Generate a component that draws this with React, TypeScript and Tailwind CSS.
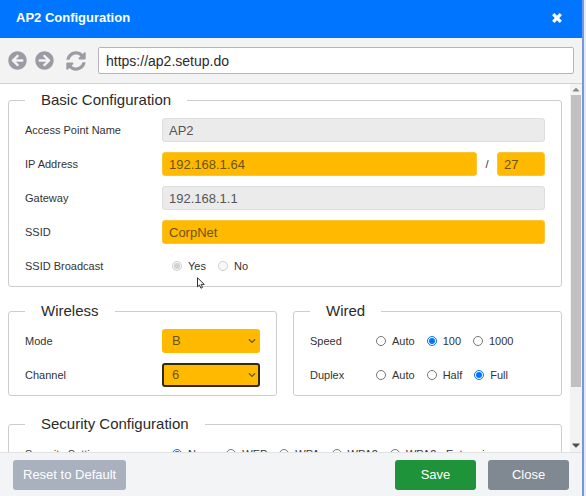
import { useState } from 'react';
import { FaArrowCircleLeft, FaArrowCircleRight, FaCaretDown, FaCaretUp, FaChevronDown, FaSyncAlt } from 'react-icons/fa';

const inputBase = 'h-6 min-w-0 rounded-[3px] px-[6px] text-[13px] leading-[18px] outline-none';
const lockedInput = `${inputBase} w-full border border-[#dedede] bg-[#ebebeb] text-[#555]`;
const editInput = `${inputBase} border border-[#fbc53a] bg-[#ffba00] text-[#6b5418]`;

type Option = { value: string };

const SECURITY: Option[] = [
  { value: 'None' },
  { value: 'WEP' },
  { value: 'WPA' },
  { value: 'WPA2' },
  { value: 'WPA2 - Enterprise' },
];

function Section({ title, children }: { title: string; children: React.ReactNode }) {
  return (
    <fieldset className="min-w-0 rounded-[3px] border border-[#cdcdcd] px-4 pb-[3px]">
      <legend className="mb-[3px] px-4 text-[15px] leading-5 text-[#2b2b2b]">{title}</legend>
      {children}
    </fieldset>
  );
}

function Field({ label, htmlFor, children }: { label: string; htmlFor: string; children: React.ReactNode }) {
  return (
    <div className="flex h-[34px] items-center">
      <label htmlFor={htmlFor} className="w-[137px] shrink-0">{label}</label>
      {children}
    </div>
  );
}

function RadioField({
  label,
  name,
  options,
  initial,
  disabled = false,
  labelClass = 'w-[147px]',
}: {
  label: string;
  name: string;
  options: Option[];
  initial: string;
  disabled?: boolean;
  labelClass?: string;
}) {
  const [value, setValue] = useState(initial);

  return (
    <div role="radiogroup" aria-labelledby={`${name}-label`} className="flex h-[34px] items-center">
      <span id={`${name}-label`} className={`${labelClass} shrink-0`}>{label}</span>
      <div className="flex gap-3 whitespace-nowrap">
        {options.map((o) => (
          <label key={o.value} className="flex items-center gap-[6px]">
            <input
              type="radio"
              name={name}
              value={o.value}
              checked={value === o.value}
              disabled={disabled}
              onChange={() => setValue(o.value)}
              className="size-[10px]"
            />
            {o.value}
          </label>
        ))}
      </div>
    </div>
  );
}

function SelectField({ label, id, options, initial, active = false }: { label: string; id: string; options: string[]; initial: string; active?: boolean }) {
  return (
    <Field label={label} htmlFor={id}>
      <div className="relative min-w-0 flex-1">
        <select
          id={id}
          defaultValue={initial}
          className={`h-6 w-full appearance-none rounded-[3px] bg-[#ffba00] px-2 text-[13px] leading-[18px] text-[#6b5418] outline-none ${
            active ? 'border-2 border-[#33290c]' : 'border-2 border-[#ffba00]'
          }`}
        >
          {options.map((o) => (
            <option key={o}>{o}</option>
          ))}
        </select>
        <FaChevronDown className="pointer-events-none absolute top-2 right-1 size-2 text-[#6b5418]" />
      </div>
    </Field>
  );
}

export default function App() {
  return (
    <div className="h-screen border-r-2 border-[#e4eaf8] font-['Liberation_Sans',Arial,sans-serif] text-[11px] text-[#333]">
      <div className="flex h-full flex-col border-r-2 border-[#7896e0] bg-white">
        <header className="flex h-[38px] shrink-0 items-center justify-between bg-[#0075ff] px-4 pb-[2px] text-white">
          <h1 className="text-[13px] font-bold">AP2 Configuration</h1>
          <button type="button" aria-label="Close window" className="mr-1">
            <svg viewBox="0 0 10 10" className="size-[10px]" stroke="currentColor" strokeWidth="3.2">
              <path d="M1.200 1.200 8.800 8.800M8.800 1.200 1.200 8.800" />
            </svg>
          </button>
        </header>

        <nav className="flex h-[46px] shrink-0 items-center border-b border-[#d2d2d4] bg-[#f3f3f4] px-2 text-[#9b9ba3]">
          <button type="button" aria-label="Back"><FaArrowCircleLeft className="size-[19px]" /></button>
          <button type="button" aria-label="Forward" className="ml-2"><FaArrowCircleRight className="size-[19px]" /></button>
          <button type="button" aria-label="Reload" className="ml-3"><FaSyncAlt className="size-5" /></button>
          <input
            aria-label="Address"
            defaultValue="https://ap2.setup.do"
            className="ml-3 h-[27px] min-w-0 flex-1 rounded-[2px] border border-[#b9b4bb] bg-white px-[7px] text-[14px] text-[#2b2b2b] outline-none"
          />
        </nav>

        <div className="flex min-h-0 flex-1">
          <main className="relative min-w-0 flex-1 overflow-x-hidden overflow-y-auto px-2 pt-[6px] [scrollbar-width:none]">
            <Section title="Basic Configuration">
              <Field label="Access Point Name" htmlFor="ap-name">
                <input id="ap-name" readOnly value="AP2" className={lockedInput} />
              </Field>
              <Field label="IP Address" htmlFor="ip">
                <input id="ip" defaultValue="192.168.1.64" className={`${editInput} flex-1`} />
                <span className="w-5 text-center">/</span>
                <input aria-label="Prefix length" defaultValue="27" className={`${editInput} w-12`} />
              </Field>
              <Field label="Gateway" htmlFor="gateway">
                <input id="gateway" readOnly value="192.168.1.1" className={lockedInput} />
              </Field>
              <Field label="SSID" htmlFor="ssid">
                <input id="ssid" defaultValue="CorpNet" className={`${editInput} w-full`} />
              </Field>
              <RadioField label="SSID Broadcast" name="broadcast" options={[{ value: 'Yes' }, { value: 'No' }]} initial="Yes" disabled />
            </Section>

            <div className="mt-[14px] mb-[18px] grid grid-cols-2 gap-4">
              <Section title="Wireless">
                <SelectField label="Mode" id="mode" options={['B', 'G', 'N']} initial="B" />
                <SelectField label="Channel" id="channel" options={['1', '6', '11']} initial="6" active />
              </Section>
              <Section title="Wired">
                <RadioField label="Speed" name="speed" options={[{ value: 'Auto' }, { value: '100' }, { value: '1000' }]} initial="100" labelClass="w-[66px]" />
                <RadioField label="Duplex" name="duplex" options={[{ value: 'Auto' }, { value: 'Half' }, { value: 'Full' }]} initial="Full" labelClass="w-[66px]" />
              </Section>
            </div>

            <Section title="Security Configuration">
              <RadioField label="Security Settings" name="security" options={SECURITY} initial="None" />
            </Section>

            {/* mouse pointer */}
            <svg viewBox="0 0 8 12" className="absolute top-[193px] left-[197px] h-3 w-2" fill="#fff" stroke="#333" strokeWidth="1">
              <path d="M.5.8v9l2-1.8 1.4 3.2 1.6-.7L4.200 7.400H7.300z" />
            </svg>
          </main>

          {/* scrollbar */}
          <div aria-hidden="true" className="flex w-3 shrink-0 flex-col items-center bg-[#f3f3f4] text-[#505050]">
            <FaCaretUp className="h-[11px] w-2 shrink-0 text-[#8a8a8a]" />
            <div className="min-h-0 w-full flex-1 px-px">
              <div className="h-[85%] bg-[#c1bfc2]" />
            </div>
            <FaCaretDown className="h-[14px] w-2 shrink-0" />
          </div>
        </div>

        <footer className="flex h-11 shrink-0 items-center gap-3 border-t border-[#e2e2e2] bg-[#f3f4f5] px-[13px] text-[13px] text-white">
          <button type="button" className="mr-auto h-[30px] rounded-[3px] bg-[#a9b0be] px-[10px]">Reset to Default</button>
          <button type="button" className="h-[30px] w-[81px] rounded-[3px] bg-[#1f9339]">Save</button>
          <button type="button" className="h-[30px] w-[81px] rounded-[3px] bg-[#808992]">Close</button>
        </footer>
      </div>
    </div>
  );
}
